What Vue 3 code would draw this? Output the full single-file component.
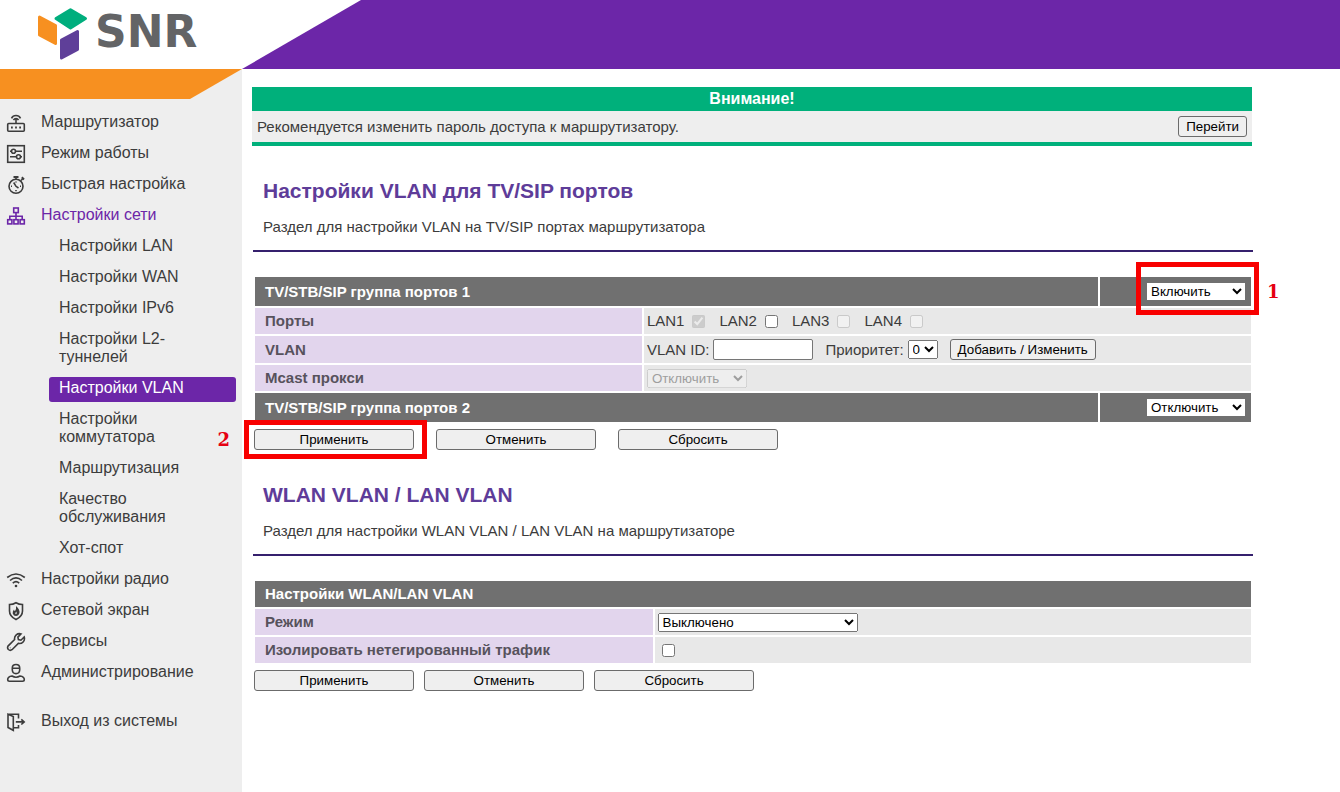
<script setup>
import { ref } from 'vue'

const topItems = [
  { id: 'router', label: 'Маршрутизатор' },
  { id: 'mode', label: 'Режим работы' },
  { id: 'quick', label: 'Быстрая настройка' },
  {
    id: 'net',
    label: 'Настройки сети',
    open: true,
    children: [
      'Настройки LAN',
      'Настройки WAN',
      'Настройки IPv6',
      'Настройки L2-туннелей',
      'Настройки VLAN',
      'Настройки коммутатора',
      'Маршрутизация',
      'Качество обслуживания',
      'Хот-спот',
    ],
  },
  { id: 'radio', label: 'Настройки радио' },
  { id: 'firewall', label: 'Сетевой экран' },
  { id: 'services', label: 'Сервисы' },
  { id: 'admin', label: 'Администрирование' },
  { id: 'exit', label: 'Выход из системы' },
]
const activeChild = 'Настройки VLAN'

const ports = ref([
  { name: 'LAN1', checked: true, disabled: true },
  { name: 'LAN2', checked: false, disabled: false },
  { name: 'LAN3', checked: false, disabled: true },
  { name: 'LAN4', checked: false, disabled: true },
])
const group1 = ref('Включить')
const group2 = ref('Отключить')
const mcast = ref('Отключить')
const vlanId = ref('')
const priority = ref(0)
const wlanMode = ref('Выключено')
const isolate = ref(false)
</script>

<template>
  <div class="page">
    <header class="header">
      <a class="logo" href="#" aria-label="SNR">
        <svg class="logo-mark" width="50" height="52" viewBox="0 0 50 52" aria-hidden="true">
          <g stroke-width="3" stroke-linejoin="round">
            <path d="M18 10.5 32.500 1.800 47.500 10.500 32.500 20Z" fill="#00ae7d" stroke="#00ae7d" />
            <path d="M1.500 9 17.500 17.500V35.500L1.500 27Z" fill="#f79020" stroke="#f79020" />
            <path d="M23.500 32 39.500 23.500V41.500L23.500 50Z" fill="#5f3f99" stroke="#5f3f99" />
          </g>
        </svg>
        <span class="logo-word">SNR</span>
      </a>
      <div class="banner"></div>
    </header>

    <div class="body">
      <aside class="sidebar">
        <div class="stripe"></div>
        <nav>
          <ul class="menu">
            <li v-for="item in topItems" :key="item.id" :class="{ exit: item.id === 'exit' }">
              <a href="#" class="item" :class="{ open: item.open }">
                <svg class="icon" width="20" height="20" viewBox="0 0 20 20" aria-hidden="true">
                  <g v-if="item.id === 'router'">
                    <rect x="1.700" y="10.500" width="16.600" height="7.800" rx="1" />
                    <path d="M10 10.500V6.500M5.500 5.300A5 5 0 0 1 14.500 5.300M7.500 7.200A2.800 2.800 0 0 1 12.500 7.200" />
                    <path class="thick" d="M5 14.400h1.800M9.100 14.400h1.800M13.200 14.400h1.800" />
                  </g>
                  <g v-else-if="item.id === 'mode'">
                    <rect x="1.700" y="1.700" width="16.600" height="16.600" />
                    <circle cx="7.500" cy="7.300" r="2" />
                    <circle cx="12.500" cy="12.700" r="2" />
                    <path d="M4 7.300h1.500M9.500 7.300h6.500M4 12.700h6.500M14.500 12.700h1.500" />
                  </g>
                  <g v-else-if="item.id === 'quick'">
                    <circle cx="10" cy="11.300" r="7" />
                    <path d="M10 4V2M15 5.500 17 3.500M10 6.500v1M5 11.300h1M14 11.300h1M10 15v1.200M7.700 7.500 10 11.300 12.500 13" />
                    <path class="thick" d="M7.500 2h5M15.800 2.300 18 4.500" />
                  </g>
                  <g v-else-if="item.id === 'net'">
                    <rect x="7.700" y="2" width="4.600" height="4.600" />
                    <rect x="1.700" y="13.700" width="4.200" height="4.200" />
                    <rect x="7.900" y="13.700" width="4.200" height="4.200" />
                    <rect x="14.100" y="13.700" width="4.200" height="4.200" />
                    <path d="M10 7v6.500M3.800 13.500V10.300H16.200V13.500" />
                  </g>
                  <g v-else-if="item.id === 'radio'">
                    <path d="M1.200 7.500Q10 .5 18.800 7.500M4 10.500Q10 5.200 16 10.500M6.800 13.200Q10 10.200 13.200 13.200" />
                    <circle cx="10" cy="16" r="1.300" class="solid" />
                  </g>
                  <g v-else-if="item.id === 'firewall'">
                    <path d="M10 1.700Q13 3.500 16.500 3.500V10Q16.500 15.500 10 18.500Q3.500 15.500 3.500 10V3.500Q7 3.500 10 1.700Z" />
                    <path class="solid" d="M10 5Q14 8.500 13.500 12Q12.500 15 10 15Q7.500 15 6.700 12.500Q6.500 10 8 8.500Q8.200 10 9 10Q10.500 8 10 5Z" />
                    <path class="spark" d="M10.300 10.500Q11.500 12.500 10 13.300Q8.500 13 10.300 10.500Z" />
                  </g>
                  <g v-else-if="item.id === 'services'">
                    <path d="M15 1.900A5 5 0 0 0 8.600 7.500L2 14.100Q1 16 2.400 17.500Q4.200 19 6 17.700L12.300 11.400A5 5 0 0 0 18.200 5L14.900 8.200 12.400 7.600 11.900 5.100Z" />
                    <path d="M4.200 15.900l.3-.3" />
                  </g>
                  <g v-else-if="item.id === 'admin'">
                    <path d="M6.300 5Q6.300 1.500 10 1.500T13.700 5V7Q13.400 10.600 10 10.600T6.300 7ZM6.300 5.200H13.700" />
                    <path d="M6 13Q1.700 13.600 1.700 16.500Q1.700 18.200 3.500 18.200H16.500Q18.300 18.200 18.300 16.500Q18.300 13.600 14 13Q10 15.600 6 13Z" />
                  </g>
                  <g v-else>
                    <path d="M2 2.200 7.300 4.500V18.300L2 15.500ZM2 2.200H12.500V6.500M12.500 13V15.800H7.300M9.800 9.900H18M15.300 7.300 18.200 9.900 15.300 12.500" />
                  </g>
                </svg>
                <span>{{ item.label }}</span>
              </a>
              <ul v-if="item.children" class="submenu">
                <li v-for="child in item.children" :key="child">
                  <a href="#" class="sub" :class="{ active: child === activeChild }">{{ child }}</a>
                </li>
              </ul>
            </li>
          </ul>
        </nav>
      </aside>

      <main class="main">
        <section class="notice">
          <h2 class="notice-title">Внимание!</h2>
          <div class="notice-body">
            <span>Рекомендуется изменить пароль доступа к маршрутизатору.</span>
            <button type="button">Перейти</button>
          </div>
        </section>

        <section class="section">
          <h1>Настройки VLAN для TV/SIP портов</h1>
          <p>Раздел для настройки VLAN на TV/SIP портах маршрутизатора</p>
          <hr />
          <table>
            <colgroup>
              <col class="c-label" />
              <col />
              <col class="c-toggle" />
            </colgroup>
            <tbody>
              <tr class="group">
                <th colspan="2" id="g1">TV/STB/SIP группа портов 1</th>
                <td class="toggle">
                  <div class="marked">
                    <select v-model="group1" class="w100" aria-labelledby="g1">
                      <option>Включить</option>
                      <option>Отключить</option>
                    </select>
                    <div class="frame frame-toggle"></div>
                    <span class="num num-right">1</span>
                  </div>
                </td>
              </tr>
              <tr>
                <th scope="row">Порты</th>
                <td colspan="2">
                  <div class="ports">
                    <label v-for="p in ports" :key="p.name">
                      {{ p.name }}
                      <input v-model="p.checked" type="checkbox" :disabled="p.disabled" />
                    </label>
                  </div>
                </td>
              </tr>
              <tr class="vlan-row">
                <th scope="row">VLAN</th>
                <td colspan="2">
                  <div class="fields">
                    <label>VLAN ID: <input v-model="vlanId" type="text" class="w100" /></label>
                    <label>Приоритет:
                      <select v-model="priority">
                        <option v-for="n in 8" :key="n" :value="n - 1">{{ n - 1 }}</option>
                      </select>
                    </label>
                    <button type="button">Добавить / Изменить</button>
                  </div>
                </td>
              </tr>
              <tr>
                <th scope="row" id="mcast">Mcast прокси</th>
                <td colspan="2">
                  <select v-model="mcast" class="w100" disabled aria-labelledby="mcast">
                    <option>Отключить</option>
                  </select>
                </td>
              </tr>
              <tr class="group">
                <th colspan="2" id="g2">TV/STB/SIP группа портов 2</th>
                <td class="toggle">
                  <select v-model="group2" class="w100" aria-labelledby="g2">
                    <option>Включить</option>
                    <option>Отключить</option>
                  </select>
                </td>
              </tr>
            </tbody>
          </table>
          <div class="actions wide">
            <div class="marked">
              <button type="button">Применить</button>
              <div class="frame frame-apply"></div>
              <span class="num num-left">2</span>
            </div>
            <button type="button">Отменить</button>
            <button type="button">Сбросить</button>
          </div>
        </section>

        <section class="section">
          <h1>WLAN VLAN / LAN VLAN</h1>
          <p>Раздел для настройки WLAN VLAN / LAN VLAN на маршрутизаторе</p>
          <hr />
          <table>
            <colgroup>
              <col class="c-label-wide" />
              <col />
            </colgroup>
            <tbody>
              <tr class="title">
                <th colspan="2">Настройки WLAN/LAN VLAN</th>
              </tr>
              <tr>
                <th scope="row" id="wmode">Режим</th>
                <td>
                  <select v-model="wlanMode" class="w200" aria-labelledby="wmode">
                    <option>Выключено</option>
                    <option>Включено</option>
                  </select>
                </td>
              </tr>
              <tr>
                <th scope="row" id="iso">Изолировать нетегированный трафик</th>
                <td class="check"><input v-model="isolate" type="checkbox" aria-labelledby="iso" /></td>
              </tr>
            </tbody>
          </table>
          <div class="actions">
            <button type="button">Применить</button>
            <button type="button">Отменить</button>
            <button type="button">Сбросить</button>
          </div>
        </section>
      </main>
    </div>
  </div>
</template>

<style>
body {
  margin: 0;
  background: #fff;
}
</style>

<style scoped>
.page {
  display: flex;
  flex-direction: column;
  min-height: 100vh;
  font-family: "Liberation Sans", Arial, sans-serif;
  font-size: 15px;
  color: #3c3c3c;
}
.header {
  display: flex;
  height: 69px;
}
.logo {
  box-sizing: border-box;
  display: flex;
  flex: none;
  gap: 7px;
  width: 242px;
  padding: 8px 0 0 38px;
  text-decoration: none;
}
.logo-word {
  font: bold 44px/48px "DejaVu Sans", sans-serif;
  color: #636466;
}
.banner {
  flex: 1;
  background: #6c26a8;
  clip-path: polygon(119px 0, 100% 0, 100% 100%, 0 100%);
}
.body {
  display: flex;
  flex: 1;
}
.sidebar {
  flex: none;
  width: 242px;
  background: #eee;
}
.stripe {
  height: 30px;
  background: #f79020;
  clip-path: polygon(0 0, 100% 0, 190px 100%, 0 100%);
}
ul {
  margin: 0;
  padding: 0;
  list-style: none;
}
.menu {
  padding-top: 12px;
  font-size: 16px;
  line-height: 18px;
}
.item {
  display: flex;
  gap: 15px;
  height: 18px;
  padding: 2px 6px 11px;
  color: #3c3c3c;
  text-decoration: none;
}
.item.open {
  color: #6c26a8;
}
.exit {
  margin-top: 18px;
}
.icon {
  flex: none;
  fill: none;
  stroke: currentColor;
  stroke-width: 1.6;
}
.thick {
  stroke-width: 2;
}
.solid {
  fill: currentColor;
  stroke: none;
}
.spark {
  fill: #eee;
  stroke: none;
}
.submenu {
  padding: 0 6px 0 49px;
}
.sub {
  display: block;
  margin-bottom: 6px;
  padding: 2px 40px 5px 10px;
  border-radius: 3px;
  color: #3c3c3c;
  text-decoration: none;
}
.sub.active {
  background: #6c26a8;
  color: #fff;
}
.main {
  flex: 1;
  min-width: 0;
  max-width: 1001px;
  padding: 18px 10px;
}
.notice {
  margin-right: 1px;
  border-bottom: 4px solid #00b07b;
  background: #eee;
}
.notice-title {
  margin: 0;
  background: #00b07b;
  color: #fff;
  font-size: 16px;
  line-height: 24px;
  text-align: center;
}
.notice-body {
  display: flex;
  align-items: center;
  justify-content: space-between;
  height: 31px;
  padding: 0 5px;
}
.section {
  margin: 33px 0 0 1px;
}
h1 {
  margin: 0 10px;
  color: #5e3c99;
  font-size: 21px;
  line-height: 24px;
}
p {
  margin: 15px 10px 14px;
  line-height: 18px;
}
hr {
  height: 2px;
  margin: 0 0 23px;
  border: 0;
  background: #35206d;
}
table {
  width: 100%;
  table-layout: fixed;
  border-spacing: 2px;
}
.c-label {
  width: 39%;
}
.c-toggle {
  width: 151px;
}
.c-label-wide {
  width: 40%;
}
th,
td {
  box-sizing: border-box;
  height: 26px;
  padding: 0 3px;
  text-align: left;
  line-height: 18px;
}
th {
  padding: 0 10px;
  background: #e2d5ed;
  color: #57525c;
}
td {
  background: #e8e8e8;
}
.vlan-row > * {
  height: 27px;
}
.group > * {
  height: 29px;
  background: #707070;
  color: #fff;
}
.title th {
  background: #707070;
  color: #fff;
}
.toggle {
  padding: 0 5px;
}
.toggle select {
  display: block;
  margin-left: auto;
  border: 1px solid #707070;
  background-color: #fff;
  color: #000;
}
button,
select,
input {
  box-sizing: border-box;
  font-family: "Liberation Sans", Arial, sans-serif;
}
button {
  height: 21px;
  border: 1px solid #6b6b6b;
  border-radius: 3px;
  background: #efefef;
  color: #000;
  padding: 0 7px;
}
select {
  display: inline-block;
  height: 19px;
  vertical-align: middle;
}
input[type="text"] {
  height: 21px;
  border: 1px solid #767676;
  border-radius: 2px;
}
input[type="checkbox"] {
  width: 13px;
  height: 13px;
  margin: 0;
}
.w100 {
  width: 100px;
}
.w200 {
  width: 200px;
}
.ports,
.fields,
.ports label,
.fields label {
  display: flex;
  align-items: center;
}
.ports {
  gap: 14px;
}
.ports label {
  gap: 8px;
}
.fields {
  gap: 12px;
}
.fields label {
  gap: 4px;
}
.check {
  padding-left: 7px;
}
.check input {
  display: block;
}
.actions {
  display: flex;
  gap: 10px;
  margin: 5px 0 0 1px;
}
.actions.wide {
  gap: 22px;
}
.actions button {
  display: block;
  width: 160px;
}
.marked {
  position: relative;
  width: fit-content;
}
.toggle .marked {
  margin-left: auto;
}
.frame {
  position: absolute;
  border: 5px solid #f80000;
  pointer-events: none;
}
.frame-toggle {
  inset: -20px -13px -14px -10px;
}
.frame-apply {
  inset: -9px -13px -9px -10px;
}
.num {
  position: absolute;
  top: 50%;
  color: #e60012;
  font: bold 18px/24px "DejaVu Serif", serif;
  transform: translateY(-50%);
}
.num-right {
  left: calc(100% + 21px);
}
.num-left {
  right: calc(100% + 24px);
}
</style>
